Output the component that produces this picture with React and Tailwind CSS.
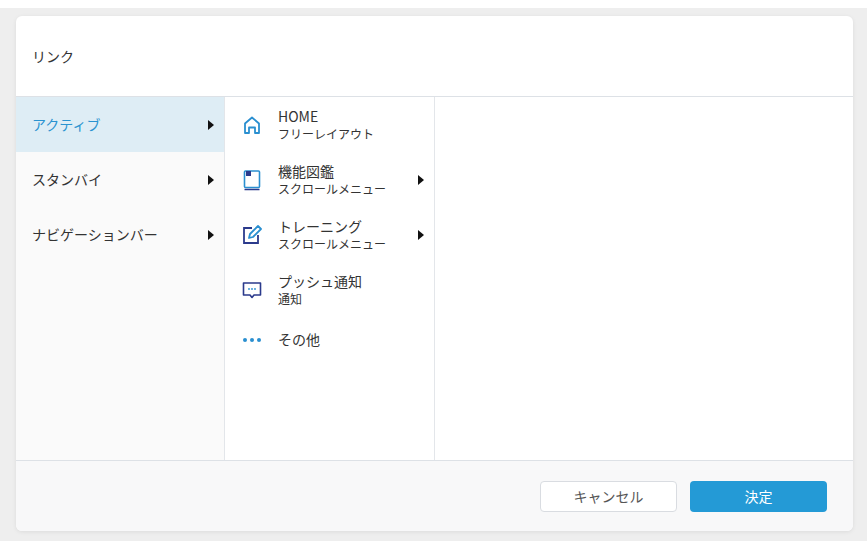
const F = { fontFamily: '"Noto Sans CJK JP","Noto Sans",sans-serif' };

const Tri = () => (
  <svg width="6" height="10" viewBox="0 0 6 10"><path d="M0 0L6 5L0 10Z" fill="#111" /></svg>
);

const Home = () => (
  <svg width="20" height="20" viewBox="0 0 20 20" fill="none" stroke="#2a8fd0" strokeWidth="1.8" strokeLinejoin="round">
    <path d="M3 18V8.5L10 2.5L17 8.5V18H13V12.5H7V18Z" />
  </svg>
);
const Book = () => (
  <svg width="20" height="22" viewBox="0 0 20 22" fill="none">
    <rect x="2.5" y="2" width="15" height="16.5" rx="1" stroke="#2a8fd0" strokeWidth="1.6" />
    <rect x="4" y="2" width="5" height="5" fill="#2b3a8c" />
    <path d="M2.5 20.5H17.5" stroke="#2b3a8c" strokeWidth="1.6" />
  </svg>
);
const Edit = () => (
  <svg width="22" height="22" viewBox="0 0 22 22" fill="none" strokeWidth="1.8">
    <path d="M11 4H3V19H17V11" stroke="#2b3a8c" />
    <path d="M8 14L9 10L17 2L20 5L12 13Z" stroke="#2a8fd0" strokeLinejoin="round" />
  </svg>
);
const Msg = () => (
  <svg width="22" height="20" viewBox="0 0 22 20" fill="none">
    <path d="M2.5 3H19.5V15H13L11 17.5L9 15H2.5Z" stroke="#2b3a8c" strokeWidth="1.6" strokeLinejoin="round" />
    <circle cx="8" cy="9" r="0.9" fill="#2a8fd0" /><circle cx="11" cy="9" r="0.9" fill="#2a8fd0" /><circle cx="14" cy="9" r="0.9" fill="#2a8fd0" />
  </svg>
);
const Dots = () => (
  <svg width="20" height="6" viewBox="0 0 20 6"><circle cx="3" cy="3" r="2" fill="#2a8fd0" /><circle cx="10" cy="3" r="2" fill="#2a8fd0" /><circle cx="17" cy="3" r="2" fill="#2a8fd0" /></svg>
);

const mids = [
  { icon: <Home />, t: "HOME", s: "フリーレイアウト" },
  { icon: <Book />, t: "機能図鑑", s: "スクロールメニュー", arrow: true },
  { icon: <Edit />, t: "トレーニング", s: "スクロールメニュー", arrow: true },
  { icon: <Msg />, t: "プッシュ通知", s: "通知" },
];

export default function App() {
  return (
    <div style={F} className="w-[867px] h-[541px] bg-[#eeeeee] relative overflow-hidden">
      <div className="absolute left-0 top-0 w-full h-[8px] bg-white" />
      <div className="absolute left-[16px] top-[16px] w-[837px] h-[515px] bg-white rounded-[6px] shadow-[0_1px_4px_rgba(0,0,0,0.08)] flex flex-col overflow-hidden">
        <div className="h-[81px] border-b border-[#dde1e6] flex items-center px-[16px] text-[14px] text-[#333]">リンク</div>
        <div className="flex h-[363px]">
          <div className="w-[209px] bg-[#fafafa] border-r border-[#e3e6ea] flex flex-col">
            {["アクティブ", "スタンバイ", "ナビゲーションバー"].map((x, i) => (
              <div key={x} className={`h-[55px] flex items-center justify-between pl-[16px] pr-[10px] text-[14px] ${i === 0 ? "bg-[#deedf5] text-[#2a93d0]" : "text-[#333]"}`}>
                <span>{x}</span><Tri />
              </div>
            ))}
          </div>
          <div className="w-[210px] border-r border-[#e3e6ea] flex flex-col">
            {mids.map((m) => (
              <div key={m.t} className="h-[55px] flex items-center pl-[16px] pr-[10px]">
                <div className="w-[22px] flex justify-center">{m.icon}</div>
                <div className="ml-[15px] flex-1 leading-[1.35]">
                  <div className="text-[14px] text-[#333]">{m.t}</div>
                  <div className="text-[12px] text-[#333]">{m.s}</div>
                </div>
                {m.arrow && <Tri />}
              </div>
            ))}
            <div className="h-[45px] flex items-center pl-[17px]">
              <Dots /><span className="ml-[16px] text-[14px] text-[#333]">その他</span>
            </div>
          </div>
          <div className="flex-1" />
        </div>
        <div className="flex-1 bg-[#f8f8f9] border-t border-[#dde1e6] flex items-center justify-end gap-[13px] pr-[26px]">
          <button className="w-[137px] h-[31px] rounded-[4px] border border-[#d9dce1] bg-white text-[14px] text-[#555]">キャンセル</button>
          <button className="w-[137px] h-[31px] rounded-[4px] bg-[#249ad6] text-[14px] text-white">決定</button>
        </div>
      </div>
    </div>
  );
}
